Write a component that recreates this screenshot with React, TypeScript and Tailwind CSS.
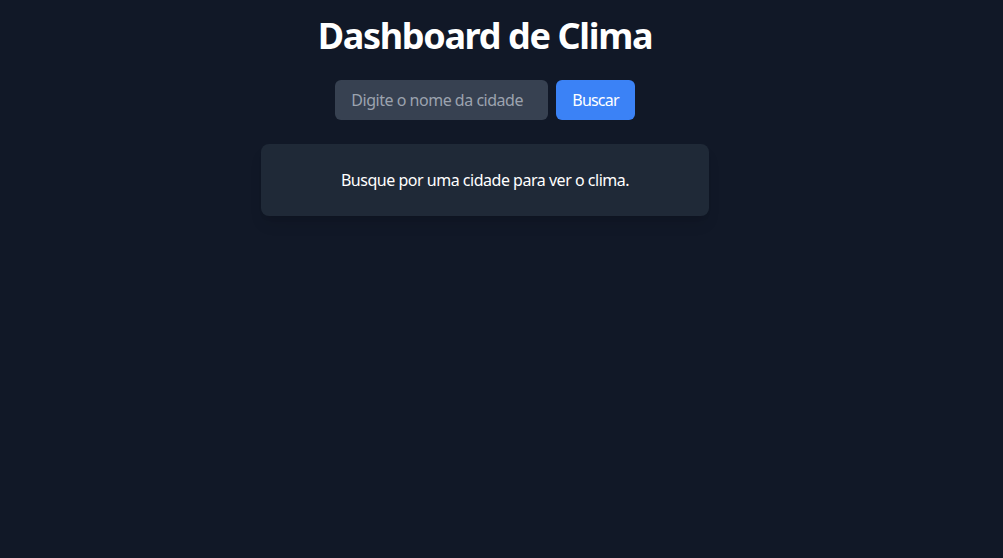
export default function App() {
  return (
    <div className="min-h-screen bg-[#111827] py-4 pl-4 pr-[49px] text-white font-['Noto_Sans',sans-serif] tracking-[-0.03em]">
      <div className="flex flex-col items-center">
        <h1 className="mb-6 text-4xl font-bold tracking-[-0.0375em]">Dashboard de Clima</h1>
        <form className="flex gap-2" onSubmit={(e) => e.preventDefault()}>
          <input
            type="text"
            placeholder="Digite o nome da cidade"
            className="w-[213px] rounded-md bg-[#374151] px-4 py-2 text-white placeholder-[#9ca3af] outline-none"
          />
          <button type="submit" className="rounded-md bg-[#3b82f6] px-4 py-2 text-white tracking-[-0.05em]">
            Buscar
          </button>
        </form>
        <div className="mt-6 w-full max-w-md rounded-lg bg-[#1f2937] p-6 text-center shadow-lg">
          <p>Busque por uma cidade para ver o clima.</p>
        </div>
      </div>
    </div>
  );
}
